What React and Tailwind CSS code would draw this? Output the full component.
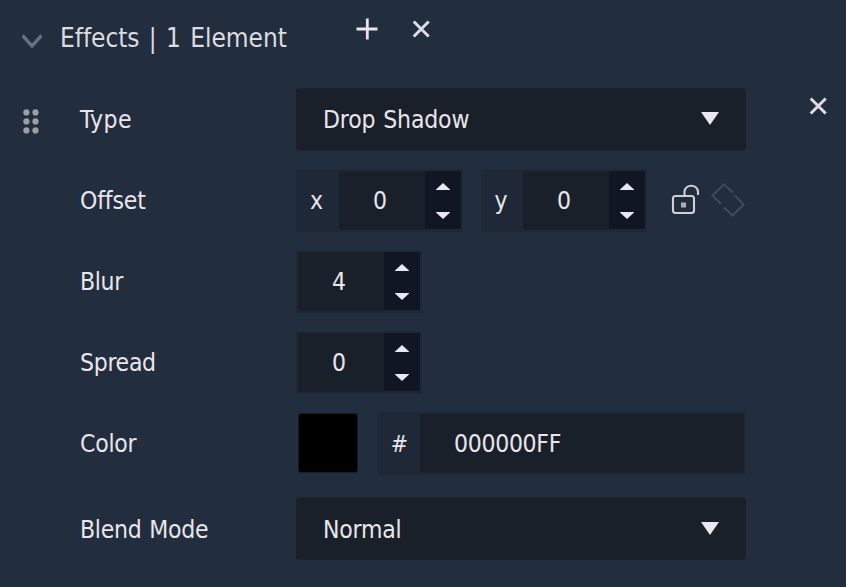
import React from "react";

function Caret({ className = "" }) {
  return (
    <svg width="18" height="13" viewBox="0 0 18 13" className={className}>
      <path d="M0 0H18L9 13Z" fill="#ebe7ef" />
    </svg>
  );
}

function Close({ className = "" }) {
  return (
    <svg width="18" height="18" viewBox="0 0 18 18" className={className} fill="none" stroke="#dfdbe6" strokeWidth="3">
      <path d="M1.7 1.5L16.7 16.5M16.7 1.5L1.7 16.5" />
    </svg>
  );
}

function Row({ label, tracking, children, className = "" }) {
  return (
    <div className={`flex h-[63px] items-center ${className}`}>
      <div className={`w-[216px] shrink-0 leading-[30px] ${tracking}`}>{label}</div>
      {children}
    </div>
  );
}

function Select({ value, tracking, caretClass = "" }) {
  return (
    <div className="flex h-[63px] w-[450px] items-center justify-between rounded-[4px] bg-[#1a2029] pr-[27px] pl-[27px]">
      <span className={`leading-[30px] ${tracking}`}>{value}</span>
      <Caret className={caretClass} />
    </div>
  );
}

function Stepper({ prefix, prefixWidth = "w-0", value }) {
  return (
    <div className="flex h-[63px] border-2 border-[#1e2836] bg-[#1e2836]">
      {prefix && (
        <div className={`flex items-center justify-center pr-[4px] leading-[30px] ${prefixWidth}`}>{prefix}</div>
      )}
      <div className="flex w-[86px] items-center justify-center bg-[#1a2029] pr-[4px] leading-[30px]">{value}</div>
      <div className="flex h-[58px] w-9 flex-col items-center justify-between bg-[#101623] pt-[12px] pb-[10px]">
        <svg width="14" height="7" viewBox="0 0 14 7"><path d="M0 7V6.4L7 0L14 6.4V7Z" fill="#ebe7ef" /></svg>
        <svg width="14" height="7" viewBox="0 0 14 7"><path d="M0 0V0.6L7 7L14 0.6V0Z" fill="#ebe7ef" /></svg>
      </div>
    </div>
  );
}

export default function App() {
  return (
    <div className="h-[587px] w-[846px] overflow-hidden bg-[#222d3d] text-[24.5px] text-[#e8e6ec] [font-family:'DejaVu_Sans_Condensed','DejaVu_Sans',sans-serif] [font-stretch:condensed] whitespace-nowrap">
      <header className="flex h-[88px] items-start">
        <svg width="20" height="16" viewBox="0 0 20 16" className="mt-[33px] ml-[22px]" fill="none" stroke="#677080" strokeWidth="3.4">
          <path d="M0.5 2.5L10 13L19.5 2.5" />
        </svg>
        <h1 className="mt-[22px] ml-[18px] w-[296px] text-[26px] leading-[32px] tracking-[-0.05px] [word-spacing:2px] text-[#dcdce0]">Effects | 1 Element</h1>
        <svg width="22" height="22" viewBox="0 0 22 22" className="mt-[18px]" fill="none" stroke="#e8e4ee" strokeWidth="2.8">
          <path d="M0.5 11H21.5M11.3 0.5V21.5" />
        </svg>
        <Close className="mt-[20px] ml-[34px]" />
      </header>
      <div className="flex">
        <div className="w-[80px] pt-[21px] pl-[23px]">
          <svg width="16" height="25" viewBox="0 0 16 25" fill="#9d9ea9">
            <circle cx="3.4" cy="3.4" r="3.1" /><circle cx="12.5" cy="3.4" r="3.1" />
            <circle cx="3.4" cy="12.4" r="3.1" /><circle cx="12.5" cy="12.4" r="3.1" />
            <circle cx="3.4" cy="21.4" r="3.1" /><circle cx="12.5" cy="21.4" r="3.1" />
          </svg>
        </div>
        <main className="flex w-[729px] flex-col gap-[18px]">
          <Row label="Type" tracking="tracking-[0.4px]">
            <Select value="Drop Shadow" tracking="tracking-[-0.15px] [word-spacing:1px]" caretClass="-mt-[3px]" />
          </Row>
          <Row label="Offset" tracking="tracking-[-0.15px]">
            <Stepper prefix="x" prefixWidth="w-[41px]" value="0" />
            <div className="w-[18px]" />
            <Stepper prefix="y" prefixWidth="w-[40px]" value="0" />
            <svg width="30" height="32" viewBox="0 0 30 32" className="ml-[24px] -mt-[3px]" fill="none" stroke="#d0ced8" strokeWidth="2.1">
              <rect x="2" y="13" width="21" height="17" rx="2.5" />
              <path d="M13.5 13V8.5A6.8 6.5 0 0 1 27 8.5V12" />
              <rect x="10" y="19.5" width="5" height="5" fill="#aeadb9" stroke="none" />
            </svg>
            <svg width="34" height="34" viewBox="0 0 34 34" className="ml-[10px] -mt-[2px]" fill="none" stroke="#3f4957" strokeWidth="2.2">
              <path d="M10 21L1.5 12.5L13 1.5L22 9.5M24 12.5L32.5 21.5L21.5 32.5L13 24.5" />
            </svg>
          </Row>
          <Row label="Blur" tracking="tracking-[-0.35px]"><Stepper value="4" /></Row>
          <Row label="Spread" tracking="tracking-[-0.3px]"><Stepper value="0" /></Row>
          <Row label="Color" tracking="tracking-[-0.25px]">
            <div className="-mt-[1px] ml-[2px] h-[60px] w-[60px] rounded-[3px] border border-[#171d27] bg-black" />
            <div className="ml-[19px] flex h-[63px] w-[369px] border-2 border-[#1e2836] bg-[#1e2836]">
              <div className="flex w-[41px] items-center justify-center leading-[30px]"><span className="text-[23px]">#</span></div>
              <div className="flex flex-1 items-center bg-[#1a2029] pl-[34px] leading-[30px] tracking-[-0.3px]">000000FF</div>
            </div>
          </Row>
          <Row label="Blend Mode" tracking="tracking-[-0.25px] [word-spacing:1px] pt-[2px]" className="mt-[4px]">
            <Select value="Normal" tracking="tracking-[-0.2px] pt-[2px]" />
          </Row>
        </main>
        <Close className="mt-[9px]" />
      </div>
    </div>
  );
}
